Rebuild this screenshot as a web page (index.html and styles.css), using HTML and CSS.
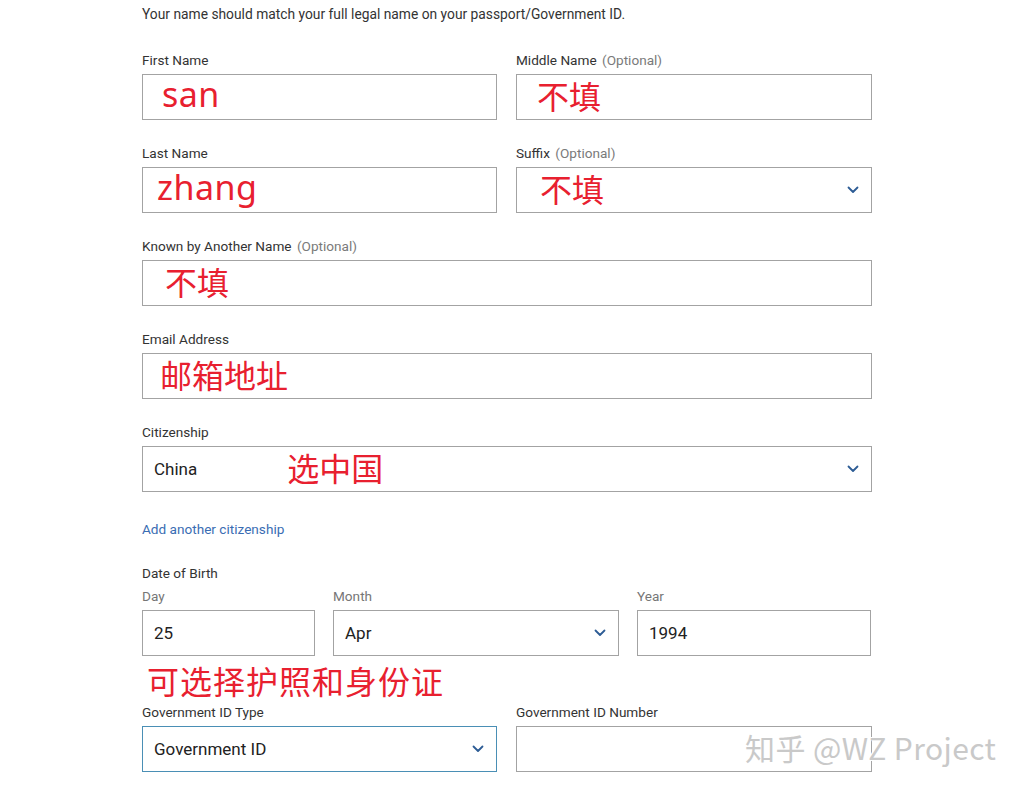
FILE: index.html
```html
<!DOCTYPE html>
<html lang="en">
<head>
<meta charset="utf-8">
<title>Personal details</title>
<link rel="stylesheet" href="styles.css">
</head>
<body>
<main class="form">
  <p class="intro">Your name should match your full legal name on your passport/Government ID.</p>

  <div class="row two">
    <div class="field">
      <label class="label">First Name</label>
      <div class="box"><span class="note latin n-san">san</span></div>
    </div>
    <div class="field">
      <label class="label">Middle Name <span class="opt">(Optional)</span></label>
      <div class="box"><span class="note cjk n-mid">不填</span></div>
    </div>
  </div>

  <div class="row two">
    <div class="field">
      <label class="label">Last Name</label>
      <div class="box"><span class="note latin n-zhang">zhang</span></div>
    </div>
    <div class="field">
      <label class="label">Suffix <span class="opt">(Optional)</span></label>
      <div class="box select"><span class="note cjk n-suffix">不填</span><svg class="chev" viewBox="0 0 12 8"><path d="M1.5 1.5 L6 6 L10.5 1.5" /></svg></div>
    </div>
  </div>

  <div class="row">
    <div class="field">
      <label class="label">Known by Another Name <span class="opt">(Optional)</span></label>
      <div class="box"><span class="note cjk n-known">不填</span></div>
    </div>
  </div>

  <div class="row">
    <div class="field">
      <label class="label">Email Address</label>
      <div class="box"><span class="note cjk n-email">邮箱地址</span></div>
    </div>
  </div>

  <div class="row last">
    <div class="field">
      <label class="label">Citizenship</label>
      <div class="box select"><span class="value">China</span><span class="note cjk n-country">选中国</span><svg class="chev" viewBox="0 0 12 8"><path d="M1.5 1.5 L6 6 L10.5 1.5" /></svg></div>
    </div>
  </div>

  <a class="link" href="#">Add another citizenship</a>

  <div class="dob">
    <div class="label">Date of Birth</div>
    <div class="dob-grid">
      <div class="field">
        <label class="sublabel">Day</label>
        <div class="box"><span class="value">25</span></div>
      </div>
      <div class="field">
        <label class="sublabel">Month</label>
        <div class="box select"><span class="value">Apr</span><svg class="chev" viewBox="0 0 12 8"><path d="M1.5 1.5 L6 6 L10.5 1.5" /></svg></div>
      </div>
      <div class="field">
        <label class="sublabel">Year</label>
        <div class="box"><span class="value">1994</span></div>
      </div>
    </div>
  </div>

  <div class="annotation">可选择护照和身份证</div>

  <div class="row two">
    <div class="field">
      <label class="label">Government ID Type</label>
      <div class="box select focus"><span class="value">Government ID</span><svg class="chev" viewBox="0 0 12 8"><path d="M1.5 1.5 L6 6 L10.5 1.5" /></svg></div>
    </div>
    <div class="field">
      <label class="label">Government ID Number</label>
      <div class="box"></div>
    </div>
  </div>
</main>
<div class="watermark">知乎 @WZ Project</div>
</body>
</html>
```

FILE: styles.css
```css
* { box-sizing: border-box; }

html, body {
  margin: 0;
  padding: 0;
  background: #ffffff;
}

body {
  width: 1024px;
  height: 795px;
  overflow: hidden;
  position: relative;
  font-family: Roboto, "Liberation Sans", Arial, sans-serif;
  color: #2b2b2b;
}

.form {
  width: 730px;
  margin-left: 142px;
  padding-top: 5px;
}

.intro {
  margin: 0 0 29px 0;
  font-size: 13.8px;
  line-height: 18px;
  color: #333333;
}

.row {
  display: grid;
  grid-template-columns: 1fr;
  column-gap: 19px;
  margin-bottom: 25px;
}

.row.two {
  grid-template-columns: 355px 356px;
}

.row.last {
  margin-bottom: 29px;
}

.field {
  display: flex;
  flex-direction: column;
  gap: 5px;
}

.label {
  display: block;
  font-size: 13.6px;
  line-height: 17px;
  color: #333333;
}

.opt {
  color: #7a7a7a;
  margin-left: 2px;
}

.sublabel {
  display: block;
  font-size: 13.6px;
  line-height: 17px;
  color: #767676;
}

.box {
  position: relative;
  height: 46px;
  border: 1px solid #a3a3a3;
  background: #ffffff;
  display: flex;
  align-items: center;
  padding-left: 11px;
}

.box.focus {
  border-color: #4a8fb5;
}

.value {
  font-size: 17px;
  color: #222222;
}

.chev {
  position: absolute;
  right: 12px;
  top: 50%;
  width: 12px;
  height: 8px;
  margin-top: -4px;
  fill: none;
  stroke: #2d5c95;
  stroke-width: 1.8;
  stroke-linecap: round;
  stroke-linejoin: round;
}

.note {
  color: #e8202f;
  font-family: "Noto Sans CJK SC", "Noto Sans", sans-serif;
  line-height: 1;
}

.note.latin {
  font-family: "Noto Sans", "Noto Sans CJK SC", sans-serif;
  font-size: 34px;
  letter-spacing: 0.5px;
  margin-top: -6px;
}

.note.cjk {
  font-size: 32px;
  margin-top: -4px;
}

.n-san { margin-left: 8px; }
.n-zhang { margin-left: 3px; }
.n-mid { margin-left: 9px; }
.n-suffix { margin-left: 12px; }
.n-known { margin-left: 11px; }
.n-email { margin-left: 6px; }
.n-country { margin-left: 90px; font-size: 31px; }

.link {
  display: block;
  width: max-content;
  font-size: 13.6px;
  line-height: 17px;
  color: #3a6db3;
  text-decoration: none;
  margin-bottom: 27px;
}

.dob .label {
  margin-bottom: 6px;
}

.dob-grid {
  display: grid;
  grid-template-columns: 173px 286px 1fr;
  column-gap: 18px;
  margin-right: 1px;
}

.annotation {
  color: #e8202f;
  font-family: "Noto Sans CJK SC", sans-serif;
  font-size: 32px;
  line-height: 48px;
  height: 48px;
  margin-left: 5px;
  letter-spacing: 1px;
}

.watermark {
  position: absolute;
  left: 745px;
  top: 728px;
  font-family: "Noto Sans CJK SC", "Noto Sans", sans-serif;
  font-size: 30px;
  line-height: 38px;
  color: #c9c9c9;
  text-shadow: 0 0 1px #ffffff, 1px 1px 0 #ffffff, -1px -1px 0 #ffffff;
  white-space: nowrap;
  letter-spacing: 0.4px;
}
```
